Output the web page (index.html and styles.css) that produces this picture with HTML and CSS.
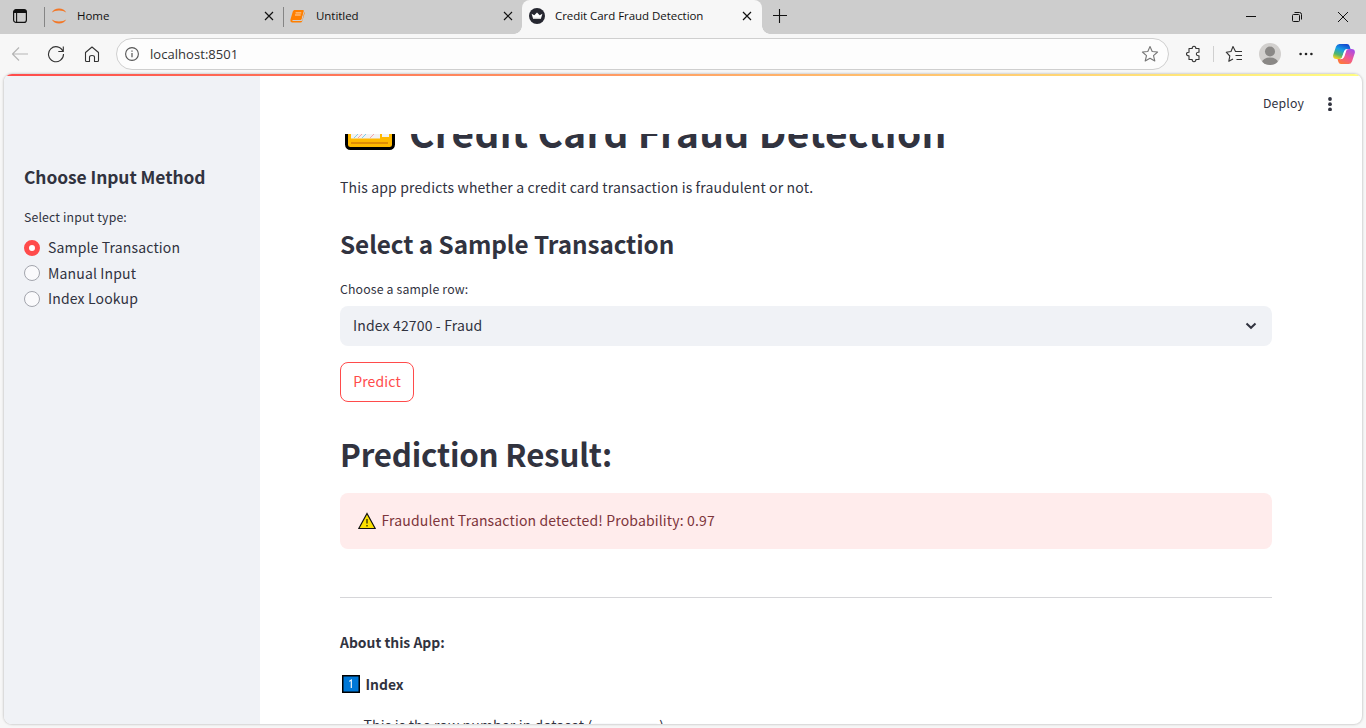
FILE: index.html
```
<!DOCTYPE html>
<html lang="en">
<head>
<meta charset="utf-8">
<title>Credit Card Fraud Detection</title>
<link rel="stylesheet" href="styles.css">
</head>
<body>
<div class="browser">
  <div class="tabstrip">
    <div class="tab-actions">
      <svg width="16" height="16" viewBox="0 0 16 16"><rect x="1.6" y="1.6" width="12.8" height="12.8" rx="2.5" fill="none" stroke="#111" stroke-width="1.2"/><path d="M1.500 5V4q0-2.500 2.500-2.500h8q2.500 0 2.500 2.500v1z" fill="#111"/><path d="M4.600 4v10" stroke="#111" stroke-width="1.100"/></svg>
    </div>
    <div class="tab tab-home">
      <svg width="16" height="16" viewBox="0 0 16 16"><path d="M.8 4.600Q3 .600 8 .600t7.200 4Q12.500 2.600 8 2.600T.8 4.600zM.8 11.400Q3 15.400 8 15.400t7.200-4Q12.500 13.400 8 13.400T.8 11.400z" fill="#f37726"/></svg>
      <span class="tab-label">Home</span>
      <svg class="close" width="10" height="10" viewBox="0 0 10 10"><path d="M1 1l8 8M9 1L1 9"/></svg>
    </div>
    <div class="tab tab-notebook">
      <svg width="15" height="14" viewBox="0 0 15 14"><path d="M4.500 1h8.300q1 .1.700 1.200L11.400 10q-.3.900-1.300.9H2.600q-.8.900.4 1.200h7.800q1.200 0 1.600-1.200L14.300 3q.6.500.3 1.500L12.300 12q-.5 1.500-1.900 1.500H2Q0 13.300.4 10.800L2.800 2.500Q3.300 1.100 4.500 1z" fill="#ff7f00"/><path d="M4.500 1h8.300q1 .1.700 1.200L11.400 10q-.3.900-1.300.9H2z" fill="#ff7f00"/><path d="M5.600 3.900h5.700M5 6h5.700" stroke="#ffe0c0" stroke-width=".9"/></svg>
      <span class="tab-label">Untitled</span>
      <svg class="close" width="10" height="10" viewBox="0 0 10 10"><path d="M1 1l8 8M9 1L1 9"/></svg>
    </div>
    <div class="tab tab-active">
      <svg width="16" height="16" viewBox="0 0 16 16"><circle cx="8" cy="8" r="8" fill="#262730"/><path d="M2.600 5.800l2.700 1.500L8 4.500l2.700 2.800 2.700-1.500L11.800 11H4.200z" fill="#fff"/><path d="M4.200 11h7.600l.3-1.300H3.900z" fill="#ccc"/></svg>
      <span class="tab-label">Credit Card Fraud Detection</span>
      <svg class="close" width="10" height="10" viewBox="0 0 10 10"><path d="M1 1l8 8M9 1L1 9"/></svg>
    </div>
    <svg class="new-tab" width="14" height="14" viewBox="0 0 14 14"><path d="M6.500 0v14M0 6.500h14" stroke="#111" stroke-width="1.100"/></svg>
    <div class="window-buttons">
      <svg width="12" height="12" viewBox="0 0 12 12"><path d="M1 5.500h10"/></svg>
      <svg width="12" height="12" viewBox="0 0 12 12"><rect x="1.500" y="3.500" width="7" height="7" rx="1"/><path d="M3.500 1.500h5q2 0 2 2v5"/></svg>
      <svg width="12" height="12" viewBox="0 0 12 12"><path d="M1 1l10 10M11 1L1 11"/></svg>
    </div>
  </div>

  <div class="toolbar">
    <svg class="nav" width="18" height="16" viewBox="0 0 18 16"><path d="M17 8H1.500M8 1.500L1.500 8 8 14.500" stroke="#b5b5b5"/></svg>
    <svg class="nav reload" width="18" height="18" viewBox="0 0 18 18"><path d="M16 6.500A7.500 7.500 0 1 0 16.500 9M16.300 1.500v5h-5"/></svg>
    <svg class="nav" width="16" height="18" viewBox="0 0 16 18"><path d="M1.500 7.500L8 2l6.500 5.500v8q0 1-1 1h-3v-4.300Q10.500 10.500 8 10.500t-2.500 1.700v4.300h-3q-1 0-1-1z"/></svg>
    <div class="address">
      <svg width="14" height="14" viewBox="0 0 14 14"><circle cx="7" cy="7" r="6.400" fill="none" stroke="#555" stroke-width="1.100"/><path d="M7 6v4.200M7 3.600v1.200" stroke="#555" stroke-width="1.200"/></svg>
      <span class="url">localhost:8501</span>
      <svg class="star" width="18" height="18" viewBox="0 0 18 18"><path d="M9 1.500l2.200 5 5.400.5-4.100 3.600 1.300 5.400L9 13.200 4.200 16l1.300-5.400L1.400 7l5.400-.5z" fill="none" stroke="#777" stroke-width="1.100" stroke-linejoin="round"/></svg>
    </div>
    <div class="tools">
      <svg class="nav" width="18" height="18" viewBox="0 0 18 18"><path d="M4 3.500h3.200Q7.200 1.300 9 1.300t1.900 2.200H14v3.800h-.8q-1.900.1-1.900 1.700t1.900 1.700h.8v3.800h-3.100Q10.900 16.700 9 16.700t-1.800-2.200H4v-3.700Q1.500 10.800 1.500 9T4 7.200z"/></svg>
      <span class="tool-divider"></span>
      <svg class="nav fav" width="18" height="18" viewBox="0 0 18 18"><path d="M11.500 6.500h-1L8 1.500l-2 5-4.800.7L4.800 11l-1 5.300L8 13.900M11.500 6.500H17M10.500 10.500H17M11.500 14.500H17"/></svg>
      <svg class="avatar" width="22" height="22" viewBox="0 0 22 22"><defs><clipPath id="face"><circle cx="11" cy="11" r="11"/></clipPath></defs><g clip-path="url(#face)"><path d="M0 0h22v22H0z" fill="#d2d0ce"/><circle cx="11" cy="8.500" r="5" fill="#8a8886"/><ellipse cx="11" cy="19.500" rx="8" ry="5" fill="#8a8886"/></g></svg>
      <svg class="more" width="14" height="4" viewBox="0 0 14 4"><circle cx="1.600" cy="2" r="1.300"/><circle cx="7" cy="2" r="1.300"/><circle cx="12.400" cy="2" r="1.300"/></svg>
      <svg class="copilot" width="22" height="22" viewBox="0 0 22 22">
        <defs>
          <linearGradient id="cool" x1="0.700" y1="0" x2="0.300" y2="1"><stop offset="0" stop-color="#1546cf"/><stop offset=".4" stop-color="#169fe6"/><stop offset=".75" stop-color="#52b66b"/><stop offset="1" stop-color="#f0cf22"/></linearGradient>
          <linearGradient id="warm" x1="0.800" y1="0" x2="0.200" y2="1"><stop offset="0" stop-color="#a64be8"/><stop offset=".5" stop-color="#ef5796"/><stop offset="1" stop-color="#ff7a33"/></linearGradient>
        </defs>
        <path d="M6.500 1H14q2 0 2.600 2l1 3.200h-3.300q-2.300 0-3.100 2.300L9 14.500Q8.300 16 6 16H3.500Q-.5 16 .2 12L3 3.500Q4 1 6.500 1z" fill="url(#cool)"/>
        <path d="M15.500 21H8q-2 0-2.600-2l-.9-3h3.200q2.300 0 3.100-2.300L13 7.500Q13.700 6 16 6h2.500Q22.500 6 21.800 10L19 18.500q-1 2.500-3.500 2.500z" fill="url(#warm)"/>
        <path d="M11.200 8L9 14.500q-.5 1.200-2 1.600 3.300.3 4.300-2.400l2-6.200q.5-1.200 1.700-1.600-3-.1-3.800 2.100z" fill="#fff"/>
      </svg>
    </div>
  </div>

  <div class="page">
    <aside class="sidebar">
      <h2 class="side-title">Choose Input Method</h2>
      <div class="side-label">Select input type:</div>
      <div class="radio"><i class="dot dot-on"></i><span>Sample Transaction</span></div>
      <div class="radio"><i class="dot"></i><span>Manual Input</span></div>
      <div class="radio"><i class="dot"></i><span>Index Lookup</span></div>
    </aside>
    <div class="content">
      <header class="app-header">
        <span class="deploy">Deploy</span>
        <svg width="4" height="14" viewBox="0 0 4 14" fill="#31333f"><circle cx="2" cy="2" r="1.900"/><circle cx="2" cy="7.200" r="1.900"/><circle cx="2" cy="12.400" r="1.900"/></svg>
      </header>
      <main class="main">
        <h1 class="title">
          <svg width="50" height="38" viewBox="0 0 50 38"><rect x="1.500" y="1.500" width="47" height="35" rx="4" fill="#ffb900" stroke="#000" stroke-width="3"/><rect x="3" y="7" width="44" height="8" fill="#333"/><path d="M6 19h29v7.500H6z" fill="#f2f2f2"/><path d="M9 26l5-5M17 26l5-5" stroke="#7fcdec"/><path d="M13 26l5-5M25 26l5-5" stroke="#f5a3a8"/><path d="M37 19h7v6h-7z" fill="#f2f2f2"/><path d="M6 31h37" stroke="#d67f05" stroke-width="1.500"/></svg>
          <span class="title-text">Credit Card Fraud Detection</span>
        </h1>
        <p class="intro">This app predicts whether a credit card transaction is fraudulent or not.</p>
        <h2 class="section">Select a Sample Transaction</h2>
        <div class="field-label">Choose a sample row:</div>
        <div class="select"><span class="select-text">Index 42700 - Fraud</span>
          <svg width="12" height="8" viewBox="0 0 12 8"><path d="M1.500 1.500L6 5.800l4.500-4.300" fill="none" stroke="#31333f" stroke-width="2"/></svg>
        </div>
        <button class="predict">Predict</button>
        <h1 class="result">Prediction Result:</h1>
        <div class="alert">
          <svg width="18" height="18" viewBox="0 0 18 18"><path d="M9 1.500L17.200 16.500H.8z" fill="#fce100" stroke="#111" stroke-width="1.200"/><path d="M9 7v4.500M9 13v1.600" stroke="#4b4300" stroke-width="1.500"/></svg>
          <span class="alert-text">Fraudulent Transaction detected! Probability: 0.97</span>
        </div>
        <hr class="rule">
        <p class="about">About this App:</p>
        <p class="item">
          <svg width="18" height="18" viewBox="0 0 18 18"><rect x=".75" y=".75" width="16.500" height="16.500" fill="#0078d7" stroke="#000" stroke-width="1.500"/><path d="M7.200 6.400L9.300 5v8" fill="none" stroke="#fff" stroke-width="1.100"/></svg>
          <span class="item-text">Index</span>
        </p>
        <p class="detail"><span class="detail-text">This is the row number in dataset (</span><code>data.csv</code>)</p>
      </main>
    </div>
  </div>
</div>
</body>
</html>
```
FILE: styles.css
```
* { box-sizing: border-box; }
body, h1, h2, p { margin: 0; }
body { background: #f7f7f7; overflow: hidden; }
svg { display: block; flex: none; }

.browser {
  height: 728px;
  display: flex;
  flex-direction: column;
  font-family: "Open Sans", sans-serif;
}

/* Tab strip */
.tabstrip { height: 34px; display: flex; background: #cdcdcd; }
.tab-actions { width: 44px; padding: 8px 12px; }
.tab {
  height: 34px;
  display: flex;
  align-items: center;
  padding: 0 10px 2px 7px;
  font-size: 11.5px;
  letter-spacing: -0.05px;
  color: #111;
  position: relative;
}
.tab-label { flex: 1; margin-left: 10px; padding-bottom: 2px; white-space: nowrap; }
.tab-home::before, .tab-notebook::before {
  content: "";
  position: absolute;
  left: 0;
  top: 7px;
  width: 1px;
  height: 20px;
  background: #858585;
}
.tab-home { width: 239px; padding-right: 9px; }
.tab-notebook { width: 239px; padding-right: 9px; }
.tab-notebook .tab-label { margin-left: 11px; }
.close { fill: none; stroke: #111; stroke-width: 1.2; }
.tab-active { width: 240px; background: #f7f7f7; border-radius: 8px 8px 0 0; }
.tab-active::before, .tab-active::after {
  content: "";
  position: absolute;
  bottom: 0;
  width: 8px;
  height: 8px;
}
.tab-active::before { left: -8px; background: radial-gradient(circle at 0 0, #cdcdcd 7.5px, #f7f7f7 8px); }
.tab-active::after { right: -8px; background: radial-gradient(circle at 100% 0, #cdcdcd 7.5px, #f7f7f7 8px); }
.new-tab { margin: 9px 0 0 11px; }
.window-buttons {
  margin-left: auto;
  display: flex;
  gap: 34px;
  padding: 11px 17px 0 0;
}
.window-buttons svg { fill: none; stroke: #111; stroke-width: 1; }

/* Toolbar */
.toolbar { height: 40px; flex: none; display: flex; align-items: center; padding-left: 11px; }
.nav { fill: none; stroke: #333; stroke-width: 1.1; margin-right: 18px; stroke-linejoin: round; }
.reload { margin-right: 19px; }
.address {
  width: 1053px;
  height: 32px;
  display: flex;
  align-items: center;
  margin-left: -2px;
  padding: 0 9px 0 8px;
  border: 1px solid #cfcfcf;
  border-radius: 16px;
  background: #fdfdfd;
}
.url { flex: 1; margin-left: 11px; font-size: 13px; letter-spacing: 0.05px; color: #333; }
.tools { flex: 1; display: flex; align-items: center; padding-left: 16px; }
.tools .nav { margin-right: 10px; }
.tool-divider { width: 1px; height: 16px; margin-right: 11px; background: #d0d0d0; }
.tools .fav { margin-right: 16px; }
.more { margin: 0 20px 0 18px; fill: #222; }

/* Web page frame */
.page {
  height: 650px;
  flex: none;
  display: flex;
  margin: 0 4px;
  border-radius: 8px;
  overflow: hidden;
  background: #fff;
  box-shadow: 0 0 2px 1px #d2d2d2;
  font-family: "Noto Sans CJK SC", sans-serif;
  font-size: 14px;
  letter-spacing: 0.15px;
  line-height: 24px;
  color: #31333f;
  position: relative;
}
.page::before {
  content: "";
  position: absolute;
  left: 0;
  top: 0;
  width: 100%;
  height: 2px;
  background: linear-gradient(90deg, #ff4b4b, #fffd80);
}
.sidebar { width: 256px; padding: 91px 20px 0; background: #f0f2f6; }
.side-title { font-size: 17.4px; line-height: 24px; font-weight: 600; letter-spacing: -0.06px; white-space: nowrap; }
.side-label { margin: 17px 0 7px; font-size: 12.3px; line-height: 22px; }
.radio { height: 25.6px; display: flex; align-items: center; gap: 8px; }
.radio span { padding-bottom: 1px; }
.dot { width: 16px; height: 16px; border: 1px solid #a3a5ad; border-radius: 50%; background: #fafafc; }
.dot-on { border: 5px solid #ff4b4b; background: #fff; }

.content { flex: 1; display: flex; flex-direction: column; }
.app-header {
  height: 60px;
  flex: none;
  display: flex;
  align-items: center;
  justify-content: flex-end;
  gap: 24px;
  padding-right: 30px;
  font-size: 12.3px;
}
.deploy { padding-bottom: 2px; }
.main { flex: 1; min-height: 0; overflow: hidden; padding: 0 90px 0 80px; white-space: nowrap; }
.title {
  height: 56px;
  display: flex;
  align-items: center;
  margin-top: -31px;
  font-size: 38.8px;
  letter-spacing: 0.32px;
  line-height: 56px;
  font-weight: 700;
}
.title svg { margin: 0 14px 0 5px; }
.intro { margin-top: 16px; }
.section { margin-top: 28px; font-size: 24.3px; line-height: 34px; font-weight: 600; letter-spacing: -0.07px; }
.field-label { margin-top: 17px; font-size: 12.3px; line-height: 22px; }
.select {
  height: 40px;
  display: flex;
  align-items: center;
  justify-content: space-between;
  margin-top: 6px;
  padding: 0 15px 1px 13px;
  border-radius: 8px;
  background: #f0f2f6;
}
.select-text, .alert-text { padding-bottom: 2px; }
.predict {
  display: block;
  width: 74px;
  height: 40px;
  margin-top: 16px;
  padding: 0 0 3px;
  border: 1px solid #ff4b4b;
  border-radius: 8px;
  background: #fff;
  font: inherit;
  letter-spacing: inherit;
  color: #ff4b4b;
}
.result { margin-top: 32px; font-size: 31.3px; line-height: 40px; font-weight: 600; letter-spacing: -0.2px; }
.alert {
  height: 56px;
  display: flex;
  align-items: center;
  gap: 5.5px;
  margin-top: 19px;
  padding-left: 18px;
  border-radius: 8px;
  background: #ffecec;
  color: #7d353b;
}
.rule { height: 1px; margin: 48px 0 32px; border: 0; background: #d6d6d9; }
.about, .item { font-weight: 600; font-size: 13.9px; letter-spacing: 0; }
.item { display: flex; align-items: center; gap: 5.5px; margin-top: 18px; padding-left: 2px; }
.detail { margin-top: 17px; padding-left: 23.5px; }
.detail code {
  display: inline-block;
  height: 22px;
  line-height: 24px;
  vertical-align: -7px;
  padding: 0 4px;
  border-radius: 4px;
  background: #f8f9fb;
  font-family: "Liberation Mono", monospace;
  font-size: 12px;
  color: #158237;
}
```
